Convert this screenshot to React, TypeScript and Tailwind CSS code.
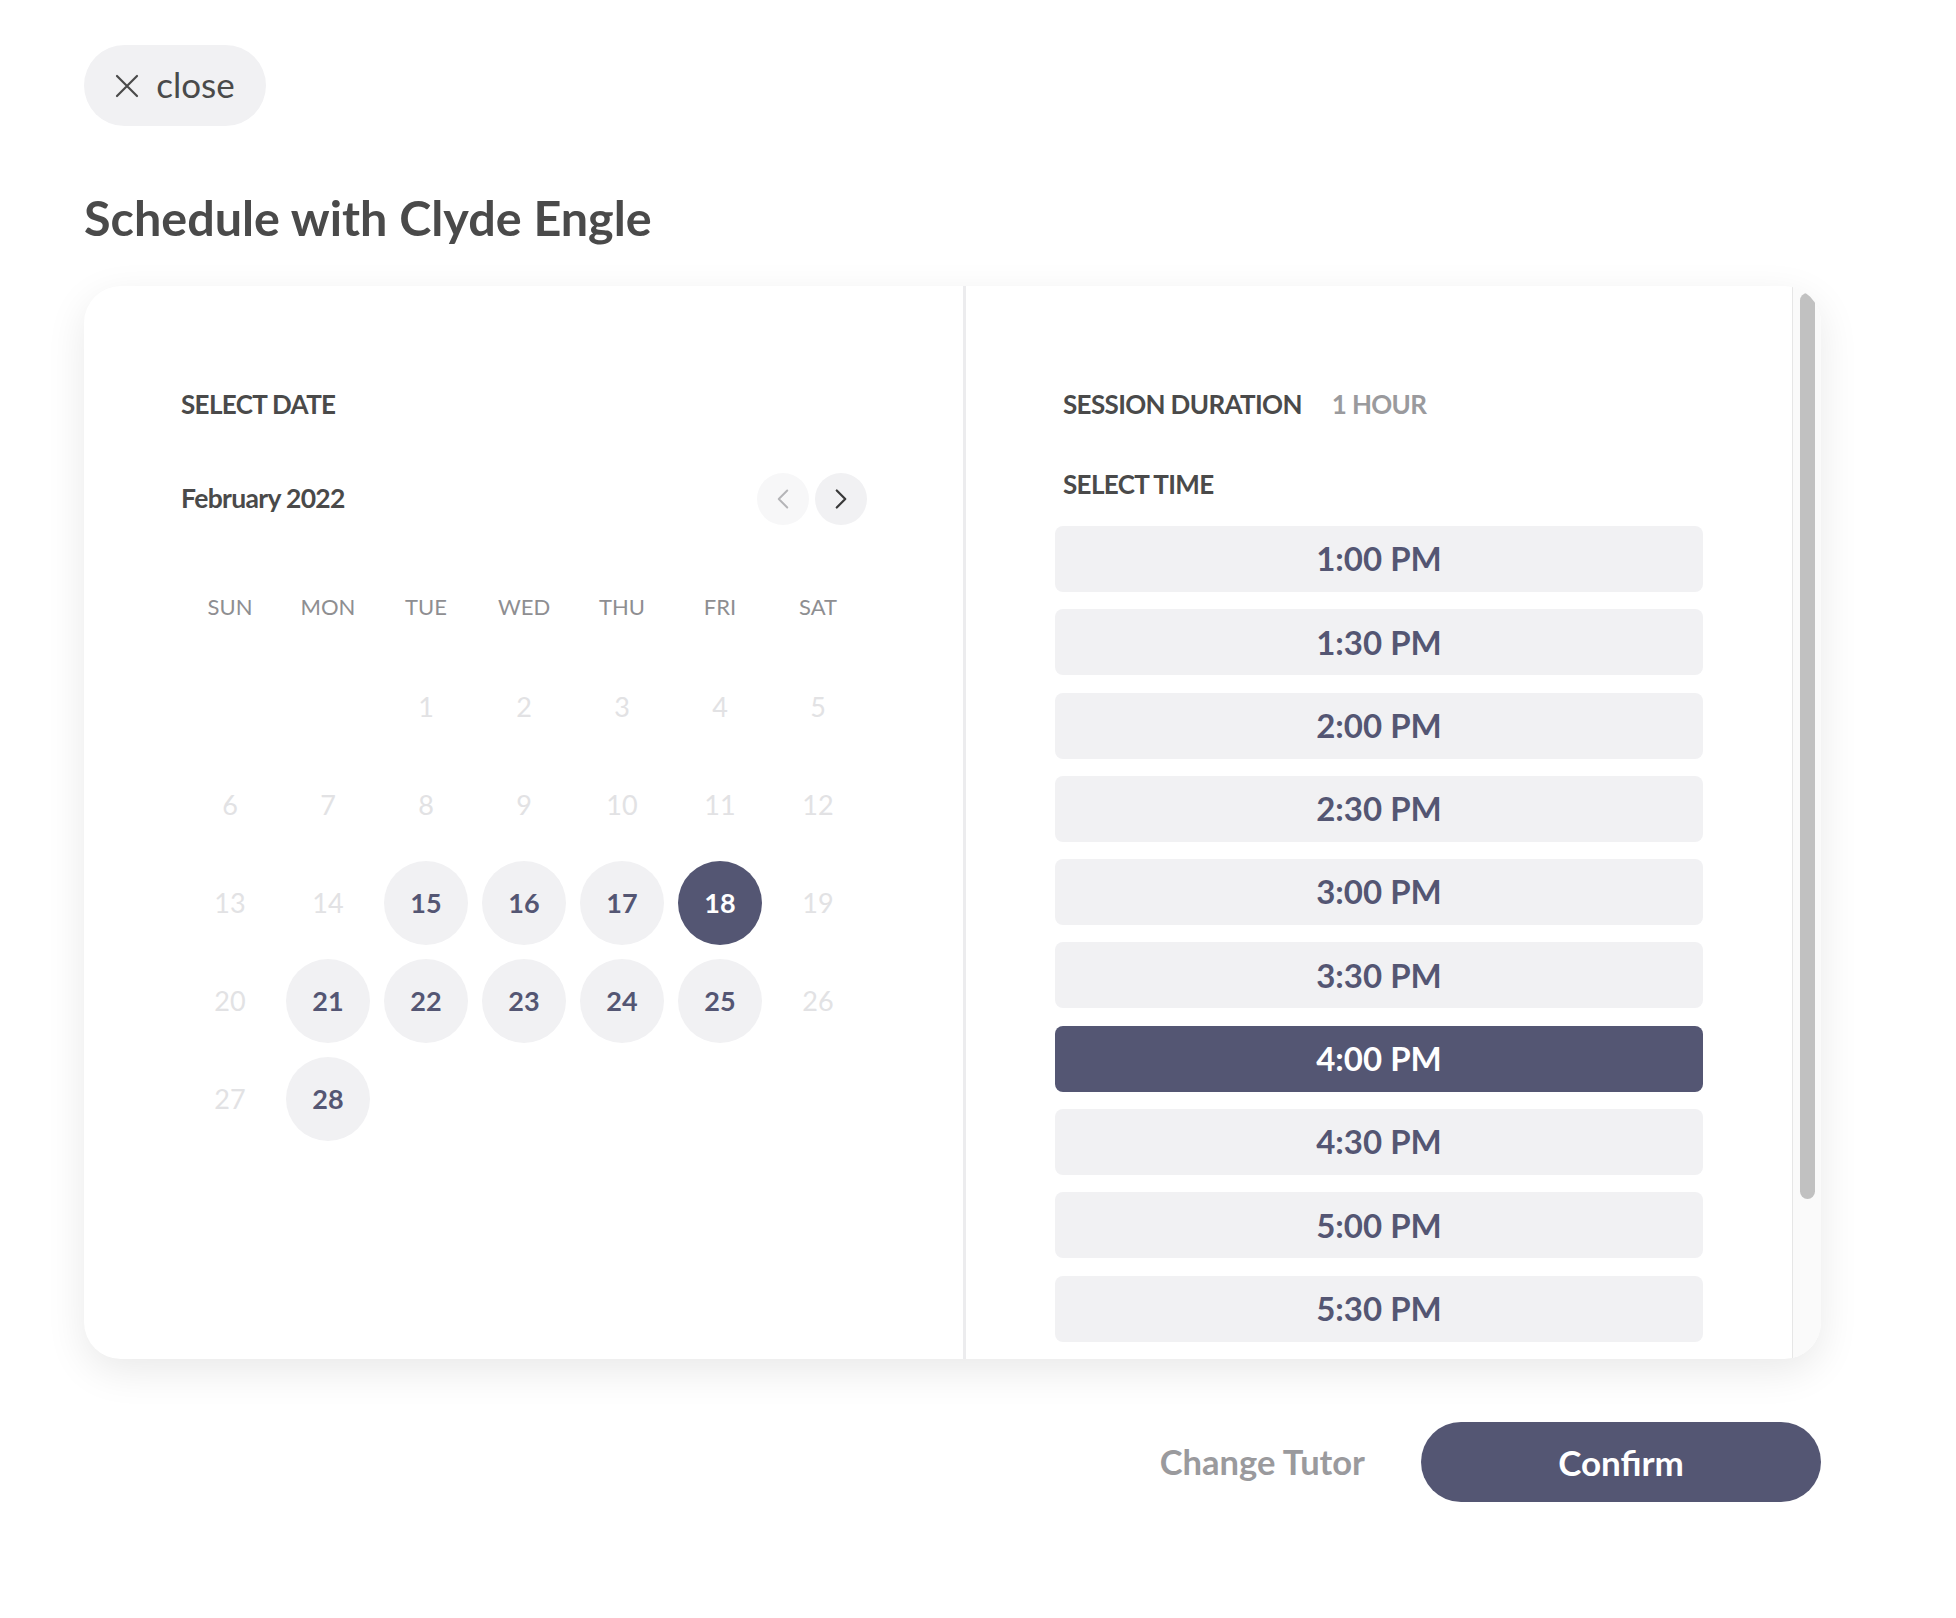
import { ChevronLeft, ChevronRight } from "lucide-react";

const font = { fontFamily: "Lato, 'Open Sans', sans-serif" };

const weekdays = ["SUN", "MON", "TUE", "WED", "THU", "FRI", "SAT"];
const available = [15, 16, 17, 18, 21, 22, 23, 24, 25, 28];
const times = ["1:00 PM", "1:30 PM", "2:00 PM", "2:30 PM", "3:00 PM", "3:30 PM", "4:00 PM", "4:30 PM", "5:00 PM", "5:30 PM"];

function DayCell({ day }: { day: number | null }) {
  if (day === null) return <div className="h-[98px]" />;
  const open = available.includes(day);
  const picked = day === 18;
  return (
    <div className="h-[98px] flex items-center justify-center">
      <div
        className={
          picked
            ? "w-[84px] h-[84px] rounded-full bg-[#545673] text-white flex items-center justify-center text-[27px] font-bold"
            : open
            ? "w-[84px] h-[84px] rounded-full bg-[#f1f1f3] text-[#545673] flex items-center justify-center text-[27px] font-bold"
            : "w-[84px] h-[84px] rounded-full flex items-center justify-center text-[27px] text-[#e2e2e4]"
        }
      >
        {day}
      </div>
    </div>
  );
}

export default function App() {
  const cells: (number | null)[] = [null, null, ...Array.from({ length: 28 }, (_, i) => i + 1)];

  return (
    <div className="min-h-screen bg-white px-[84px] pt-[45px] text-[#4a4a4a]" style={font}>
      <button className="h-[81px] w-[182px] rounded-full bg-[#f1f1f3] flex items-center justify-center gap-[17px] text-[35px] text-[#4a4a4a]">
        <svg width="24" height="24" viewBox="0 0 24 24" fill="none" stroke="currentColor" strokeWidth="2.2" strokeLinecap="round">
          <path d="M2 2 L22 22 M22 2 L2 22" />
        </svg>
        <span className="leading-none -mt-[2px]">close</span>
      </button>

      <h1 className="mt-[62px] text-[48.5px] leading-[58px] font-bold text-[#4a4a4a]">Schedule with Clyde Engle</h1>

      <div className="mt-[40px] w-[1737px] h-[1073px] rounded-[37px] bg-white shadow-[0_12px_40px_rgba(0,0,0,0.09)] flex overflow-hidden">
        {/* date side */}
        <div className="w-[882px] shrink-0 border-r-[3px] border-[#ececee] pl-[97px] pt-[106px]">
          <div className="text-[26px] leading-[24px] font-bold tracking-tight">SELECT DATE</div>

          <div className="mt-[57px] w-[686px] h-[52px] flex items-center justify-between">
            <div className="text-[26.5px] font-bold tracking-tight">February 2022</div>
            <div className="flex items-center gap-[6px]">
              <button className="w-[52px] h-[52px] rounded-full bg-[#f7f7f8] flex items-center justify-center text-[#b5b5b8]">
                <ChevronLeft className="w-[34px] h-[34px]" strokeWidth={1.4} />
              </button>
              <button className="w-[52px] h-[52px] rounded-full bg-[#f1f1f3] flex items-center justify-center text-[#3a3a3a]">
                <ChevronRight className="w-[34px] h-[34px]" strokeWidth={1.6} />
              </button>
            </div>
          </div>

          <div className="mt-[65px] w-[686px] grid grid-cols-7 h-[30px] items-center">
            {weekdays.map((d) => (
              <div key={d} className="text-center text-[22px] text-[#8e8e91]">
                {d}
              </div>
            ))}
          </div>

          <div className="mt-[38px] w-[686px] grid grid-cols-7">
            {cells.map((d, i) => (
              <DayCell key={i} day={d} />
            ))}
          </div>
        </div>

        {/* time side */}
        <div className="flex-1 flex min-w-0">
          <div className="flex-1 pl-[89px] pt-[106px] overflow-hidden">
            <div className="pl-[8px] flex items-center gap-[30px] text-[26px] leading-[24px] font-bold tracking-tight">
              <span>SESSION DURATION</span>
              <span className="text-[#9a9a9d]">1 HOUR</span>
            </div>
            <div className="pl-[8px] mt-[56px] text-[26px] leading-[24px] font-bold tracking-tight">SELECT TIME</div>

            <div className="mt-[30px] w-[648px] flex flex-col gap-[17.3px]">
              {times.map((t) => (
                <div
                  key={t}
                  className={
                    t === "4:00 PM"
                      ? "h-[66px] shrink-0 rounded-[8px] bg-[#545673] text-white flex items-center justify-center text-[33px] font-bold"
                      : "h-[66px] shrink-0 rounded-[8px] bg-[#f1f1f3] text-[#545673] flex items-center justify-center text-[33px] font-bold"
                  }
                >
                  {t}
                </div>
              ))}
            </div>
          </div>

          {/* scrollbar */}
          <div className="w-[29px] shrink-0 border-l border-[#e6e6e6] bg-[#fafafa] pt-[7px] pl-[7px]">
            <div className="w-[15px] h-[906px] rounded-full bg-[#c1c1c1]" />
          </div>
        </div>
      </div>

      <div className="mt-[63px] w-[1737px] flex items-center justify-end gap-[56px]">
        <button className="text-[34.5px] font-bold text-[#9a9a9d]">Change Tutor</button>
        <button className="w-[400px] h-[80px] rounded-full bg-[#545673] text-white text-[35px] font-bold">Confirm</button>
      </div>
    </div>
  );
}
